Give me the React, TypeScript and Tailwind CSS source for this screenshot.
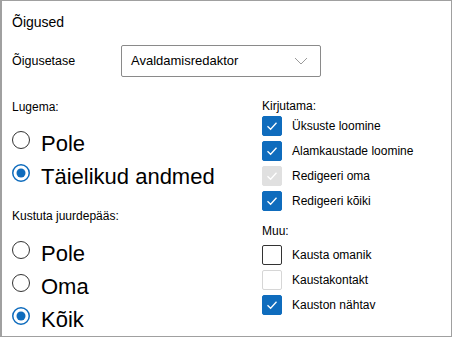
import type { ReactNode } from 'react'

const font = { fontFamily: '"Liberation Sans", Arial, sans-serif' }

function Radio({ checked, label }: { checked?: boolean; label: string }) {
  return (
    <div className="flex items-start h-[33px]">
      <svg width="18" height="18" viewBox="0 0 18 18" className="mt-[4px] shrink-0">
        {checked ? (
          <>
            <circle cx="9" cy="9" r="8.25" fill="white" stroke="#0f6cbd" strokeWidth="1.5" />
            <circle cx="9" cy="9" r="4.5" fill="#0f6cbd" />
          </>
        ) : (
          <circle cx="9" cy="9" r="8.5" fill="white" stroke="#333333" strokeWidth="1" />
        )}
      </svg>
      <span className="ml-[11px] text-[22px] leading-[33px] text-black">{label}</span>
    </div>
  )
}

type BoxKind = 'on' | 'off' | 'disabledOn' | 'disabledOff'

function Check({ kind, label }: { kind: BoxKind; label: string }) {
  const box: Record<BoxKind, string> = {
    on: 'bg-[#0f6cbd] border-[#0f6cbd]',
    off: 'bg-white border-[#333333]',
    disabledOn: 'bg-[#e0e0e0] border-[#e0e0e0]',
    disabledOff: 'bg-white border-[#d6d6d6]',
  }
  const showTick = kind === 'on' || kind === 'disabledOn'
  return (
    <div className="flex items-center h-[25px]">
      <div className={`w-5 h-5 rounded-[2px] border flex items-center justify-center shrink-0 ${box[kind]}`}>
        {showTick && (
          <svg width="14" height="14" viewBox="0 0 14 14">
            <path d="M2.5 7.2 L5.6 10.2 L11.5 3.8" fill="none" stroke="white" strokeWidth="1.3" />
          </svg>
        )}
      </div>
      <span className="ml-[10px] text-[12px] leading-4 text-black">{label}</span>
    </div>
  )
}

function Caption({ children, className = '' }: { children: ReactNode; className?: string }) {
  return <div className={`text-[12px] leading-4 text-black ${className}`}>{children}</div>
}

export default function App() {
  return (
    <div
      style={font}
      className="w-[452px] h-[337px] bg-white border border-l-2 border-[#a0a0a0] pl-[10px] pt-[11px] overflow-hidden"
    >
      <div className="text-[14px] leading-5 text-black">Õigused</div>

      <div className="flex items-center mt-[13px]">
        <div className="w-[109px] text-[12.5px] text-black">Õigusetase</div>
        <div className="w-[200px] h-[32px] border border-[#8a8a8a] rounded-[2px] flex items-center justify-between pl-[9px] pr-[12px]">
          <span className="text-[13px] text-black">Avaldamisredaktor</span>
          <svg width="14" height="8" viewBox="0 0 14 8">
            <path d="M1 1 L7 7 L13 1" fill="none" stroke="#9a9a9a" strokeWidth="1" />
          </svg>
        </div>
      </div>

      <div className="flex">
        <div className="w-[250px]">
          <Caption className="mt-[22px]">Lugema:</Caption>
          <div className="mt-[12px]">
            <Radio label="Pole" />
            <Radio checked label="Täielikud andmed" />
          </div>
          <Caption className="mt-[15px]">Kustuta juurdepääs:</Caption>
          <div className="mt-[13px]">
            <Radio label="Pole" />
            <Radio label="Oma" />
            <Radio checked label="Kõik" />
          </div>
        </div>

        <div className="w-[180px]">
          <Caption className="mt-[21px]">Kirjutama:</Caption>
          <div className="mt-[-0.5px]">
            <Check kind="on" label="Üksuste loomine" />
            <Check kind="on" label="Alamkaustade loomine" />
            <Check kind="disabledOn" label="Redigeeri oma" />
            <Check kind="on" label="Redigeeri kõiki" />
          </div>
          <Caption className="mt-[9.5px]">Muu:</Caption>
          <div className="mt-[3px]">
            <Check kind="off" label="Kausta omanik" />
            <Check kind="disabledOff" label="Kaustakontakt" />
            <Check kind="on" label="Kauston nähtav" />
          </div>
        </div>
      </div>
    </div>
  )
}
